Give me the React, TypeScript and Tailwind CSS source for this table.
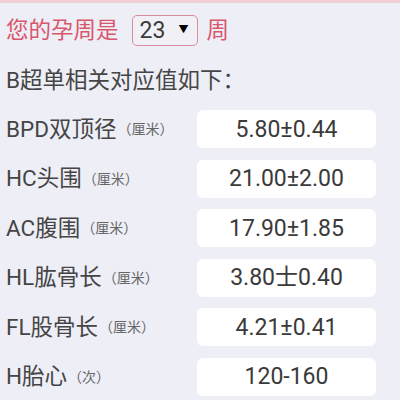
import React from "react";

const rows = [
  { label: "BPD双顶径", unit: "（厘米）", value: "5.80±0.44" },
  { label: "HC头围", unit: "（厘米）", value: "21.00±2.00" },
  { label: "AC腹围", unit: "（厘米）", value: "17.90±1.85" },
  { label: "HL肱骨长", unit: "（厘米）", value: "3.80士0.40" },
  { label: "FL股骨长", unit: "（厘米）", value: "4.21±0.41" },
  { label: "H胎心", unit: "（次）", value: "120-160" },
];

export default function App() {
  return (
    <div
      className="w-[400px] h-[400px] overflow-hidden bg-[#eeeef6] border-t-[3px] border-[#f3cdd6] flex flex-col"
      style={{ fontFamily: 'Roboto, "Noto Sans CJK SC", sans-serif' }}
    >
      <div className="flex items-center h-[30px] mt-[12px] pl-[6px] text-[22.5px] text-[#d9576c] leading-none">
        <span>您的孕周是</span>
        <div className="ml-[13px] w-[66px] h-[31px] border-[1.5px] border-[#d98d9c] rounded-[5px] flex items-center pl-[7px] pr-[8px] bg-[#f1f0f6]">
          <span className="text-[#3a3a3a] text-[23px]">23</span>
          <span className="ml-auto text-[10px] text-black">▼</span>
        </div>
        <span className="ml-[9px]">周</span>
      </div>
      <div className="h-[30px] mt-[20px] pl-[6px] flex items-center text-[22.5px] text-[#454545] leading-none">
        B超单相关对应值如下：
      </div>
      <div className="flex flex-col gap-[11.5px] mt-[15px]">
        {rows.map((r) => (
          <div key={r.label} className="flex items-center h-[38px]">
            <div className="w-[197px] pl-[6px] flex items-center text-[22.5px] text-[#454545] leading-none whitespace-nowrap">
              <span>{r.label}</span>
              <span className="text-[14px] text-[#666] ml-[1px]">{r.unit}</span>
            </div>
            <div className="w-[179px] h-[38px] bg-white rounded-[6px] flex items-center justify-center text-[23px] text-[#3a3a3a] leading-none">
              {r.value}
            </div>
          </div>
        ))}
      </div>
    </div>
  );
}
